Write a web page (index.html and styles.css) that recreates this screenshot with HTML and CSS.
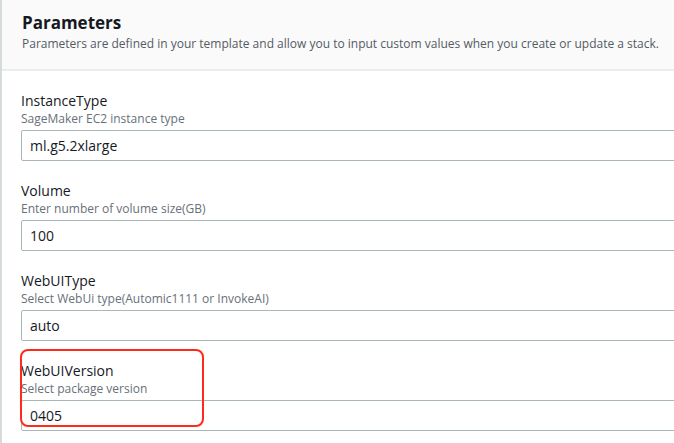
FILE: index.html
```html
<!DOCTYPE html>
<html>
<head>
<meta charset="utf-8">
<link rel="stylesheet" href="styles.css">
</head>
<body>
<div class="panel">
  <div class="panel-header">
    <h2 class="title">Parameters</h2>
    <p class="subtitle">Parameters are defined in your template and allow you to input custom values when you create or update a stack.</p>
  </div>
  <div class="panel-body">
    <div class="field">
      <div class="label">InstanceType</div>
      <div class="desc">SageMaker EC2 instance type</div>
      <div class="input">ml.g5.2xlarge</div>
    </div>
    <div class="field">
      <div class="label">Volume</div>
      <div class="desc">Enter number of volume size(GB)</div>
      <div class="input">100</div>
    </div>
    <div class="field">
      <div class="label">WebUIType</div>
      <div class="desc">Select WebUi type(Automic1111 or InvokeAI)</div>
      <div class="input">auto</div>
    </div>
    <div class="field">
      <div class="label">WebUIVersion</div>
      <div class="desc">Select package version</div>
      <div class="input">0405</div>
      <div class="highlight"></div>
    </div>
  </div>
</div>
</body>
</html>
```

FILE: styles.css
```css
html, body {
  margin: 0;
  padding: 0;
  background: #ffffff;
}
body {
  font-family: "Open Sans", "Noto Sans", sans-serif;
  color: #16191f;
  overflow: hidden;
  width: 674px;
  height: 443px;
}
.panel {
  border-left: 2px solid #d5dbdb;
  height: 443px;
  overflow: hidden;
}
.panel-header {
  background: #fafafa;
  border-bottom: 2px solid #eaeded;
  height: 71px;
  box-sizing: border-box;
  padding: 11px 0 0 20px;
}
.title {
  margin: 0;
  font-size: 17px;
  font-weight: 700;
  line-height: 23px;
  color: #16191f;
}
.subtitle {
  margin: 2px 0 0 0;
  font-size: 12px;
  line-height: 16px;
  color: #545b64;
  white-space: nowrap;
}
.panel-body {
  padding: 20px 0 0 19px;
}
.field {
  position: relative;
  height: 90px;
}
.label {
  font-size: 14px;
  line-height: 20px;
  color: #16191f;
}
.desc {
  font-size: 12px;
  line-height: 16px;
  color: #687078;
  margin-bottom: 3px;
}
.input {
  margin-right: -10px;
  height: 31px;
  box-sizing: border-box;
  border: 1px solid #aab7b8;
  border-radius: 2px;
  padding: 0 8px;
  font-size: 14px;
  line-height: 29px;
  color: #16191f;
}
.highlight {
  position: absolute;
  left: -1px;
  top: -12px;
  width: 184px;
  height: 78px;
  box-sizing: border-box;
  border: 2px solid #ff2a1a;
  border-radius: 8px;
  pointer-events: none;
}
```
